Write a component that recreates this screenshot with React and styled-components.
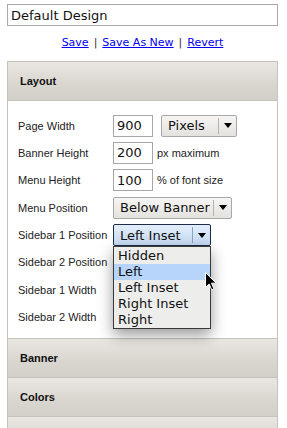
import React from "react";
import styled, { createGlobalStyle } from "styled-components";

const Global = createGlobalStyle`
  html, body { margin: 0; padding: 0; background: #fff; }
  body { font-family: "Liberation Sans", Arial, sans-serif; }
`;

const Page = styled.div`
  width: 287px;
  padding: 4px 9px 0 7px;
  box-sizing: border-box;
`;

const NameInput = styled.input`
  display: block;
  width: 271px;
  height: 22px;
  box-sizing: border-box;
  border: 1px solid #a9a9a9;
  padding: 0 3px;
  font: 13px "DejaVu Sans", sans-serif;
  color: #111;
  outline: none;
`;

const Links = styled.div`
  margin: 10px 0 11px;
  text-align: center;
  font: 11px/14px "DejaVu Sans", sans-serif;
  color: #333;
`;

const Link = styled.a`
  color: #0000ee;
  text-decoration: underline;
`;

const Sep = styled.span`
  margin: 0 5px;
`;

const Panel = styled.div`
  width: 271px;
  box-sizing: border-box;
  border-left: 1px solid #c6c2bc;
  border-right: 1px solid #c6c2bc;
`;

const Header = styled.div`
  height: 38px;
  border-top: 1px solid #c6c2bc;
  background: linear-gradient(#eae7e3, #d9d5cf 60%, #d3cfc9);
  display: flex;
  align-items: center;
  padding-left: 12px;
  font: bold 11px "Liberation Sans", Arial, sans-serif;
  color: #111;
`;

const Content = styled.div`
  height: 238px;
  border-top: 1px solid #c6c2bc;
  background: #fff;
  padding: 13px 0 0 10px;
  box-sizing: border-box;
  display: grid;
  grid-template-columns: 95px 1fr;
  grid-auto-rows: 23px;
  row-gap: 4.4px;
  align-items: center;
`;

const Label = styled.div`
  font: 11px "Liberation Sans", Arial, sans-serif;
  color: #222;
`;

const Controls = styled.div`
  display: flex;
  align-items: center;
  gap: 8px;
  position: relative;
`;

const NumInput = styled.input`
  width: 40px;
  height: 22px;
  box-sizing: border-box;
  border: 1px solid #a7a7a7;
  padding: 0 3px;
  font: 13px "DejaVu Sans", sans-serif;
  color: #111;
  outline: none;
`;

const Unit = styled.span`
  font: 11px "Liberation Sans", Arial, sans-serif;
  color: #222;
  margin-left: -4px;
`;

const SelectBox = styled.div`
  position: relative;
  display: flex;
  align-items: center;
  width: ${(p) => p.$w}px;
  height: 22px;
  box-sizing: border-box;
  border: 1px solid ${(p) => (p.$focus ? "#1d2b45" : "#a8a8a8")};
  border-radius: 2px;
  background: ${(p) =>
    p.$focus
      ? "linear-gradient(#e3eefb, #c4d9f2)"
      : "linear-gradient(#f6f5f3, #e4e2df)"};
  font: 13px "DejaVu Sans", sans-serif;
  color: #111;
`;

const SelectText = styled.span`
  flex: 1;
  padding-left: 6px;
  white-space: nowrap;
`;

const ArrowCell = styled.span`
  width: 17px;
  height: 16px;
  border-left: 1px solid ${(p) => (p.$focus ? "#8fa3bf" : "#b5b3b0")};
  display: flex;
  align-items: center;
  justify-content: center;
`;

const Menu = styled.ul`
  position: absolute;
  top: 22px;
  left: 0;
  width: 98px;
  margin: 0;
  padding: 1px 0 0;
  list-style: none;
  box-sizing: border-box;
  border: 1px solid #3a3a3a;
  background: #ededeb;
  box-shadow: 0 6px 14px rgba(0, 0, 0, 0.4);
  z-index: 5;
`;

const Item = styled.li`
  height: 16px;
  padding-left: 4px;
  font: 13px/16px "DejaVu Sans", sans-serif;
  color: #111;
  background: ${(p) => (p.$active ? "#b7d5fb" : "transparent")};
`;

const Cursor = styled.svg`
  position: absolute;
  left: 92px;
  top: 48px;
  z-index: 6;
`;

const Arrow = () => (
  <svg width="8" height="5" viewBox="0 0 8 5">
    <path d="M0 0H8L4 5Z" fill="#000" />
  </svg>
);

const Select = ({ w, value, focus }) => (
  <SelectBox $w={w} $focus={focus}>
    <SelectText>{value}</SelectText>
    <ArrowCell $focus={focus}>
      <Arrow />
    </ArrowCell>
  </SelectBox>
);

export default function App() {
  return (
    <Page>
      <Global />
      <NameInput defaultValue="Default Design" />
      <Links>
        <Link href="#">Save</Link>
        <Sep>|</Sep>
        <Link href="#">Save As New</Link>
        <Sep>|</Sep>
        <Link href="#">Revert</Link>
      </Links>
      <Panel>
        <Header>Layout</Header>
        <Content>
          <Label>Page Width</Label>
          <Controls>
            <NumInput defaultValue="900" />
            <Select w={76} value="Pixels" />
          </Controls>
          <Label>Banner Height</Label>
          <Controls>
            <NumInput defaultValue="200" />
            <Unit>px maximum</Unit>
          </Controls>
          <Label>Menu Height</Label>
          <Controls>
            <NumInput defaultValue="100" />
            <Unit>% of font size</Unit>
          </Controls>
          <Label>Menu Position</Label>
          <Controls>
            <Select w={119} value="Below Banner" />
          </Controls>
          <Label>Sidebar 1 Position</Label>
          <Controls>
            <Select w={98} value="Left Inset" focus />
            <Menu>
              <Item>Hidden</Item>
              <Item $active>Left</Item>
              <Item>Left Inset</Item>
              <Item>Right Inset</Item>
              <Item>Right</Item>
            </Menu>
            <Cursor width="12" height="19" viewBox="0 0 12 19">
              <path
                d="M0.5 0.5V15.5L4.2 12L6.8 18L9 17L6.5 11.2H11.3Z"
                fill="#000"
                stroke="#fff"
                strokeWidth="1"
              />
            </Cursor>
          </Controls>
          <Label>Sidebar 2 Position</Label>
          <Controls />
          <Label>Sidebar 1 Width</Label>
          <Controls />
          <Label>Sidebar 2 Width</Label>
          <Controls />
        </Content>
        <Header>Banner</Header>
        <Header>Colors</Header>
        <Header />
      </Panel>
    </Page>
  );
}
